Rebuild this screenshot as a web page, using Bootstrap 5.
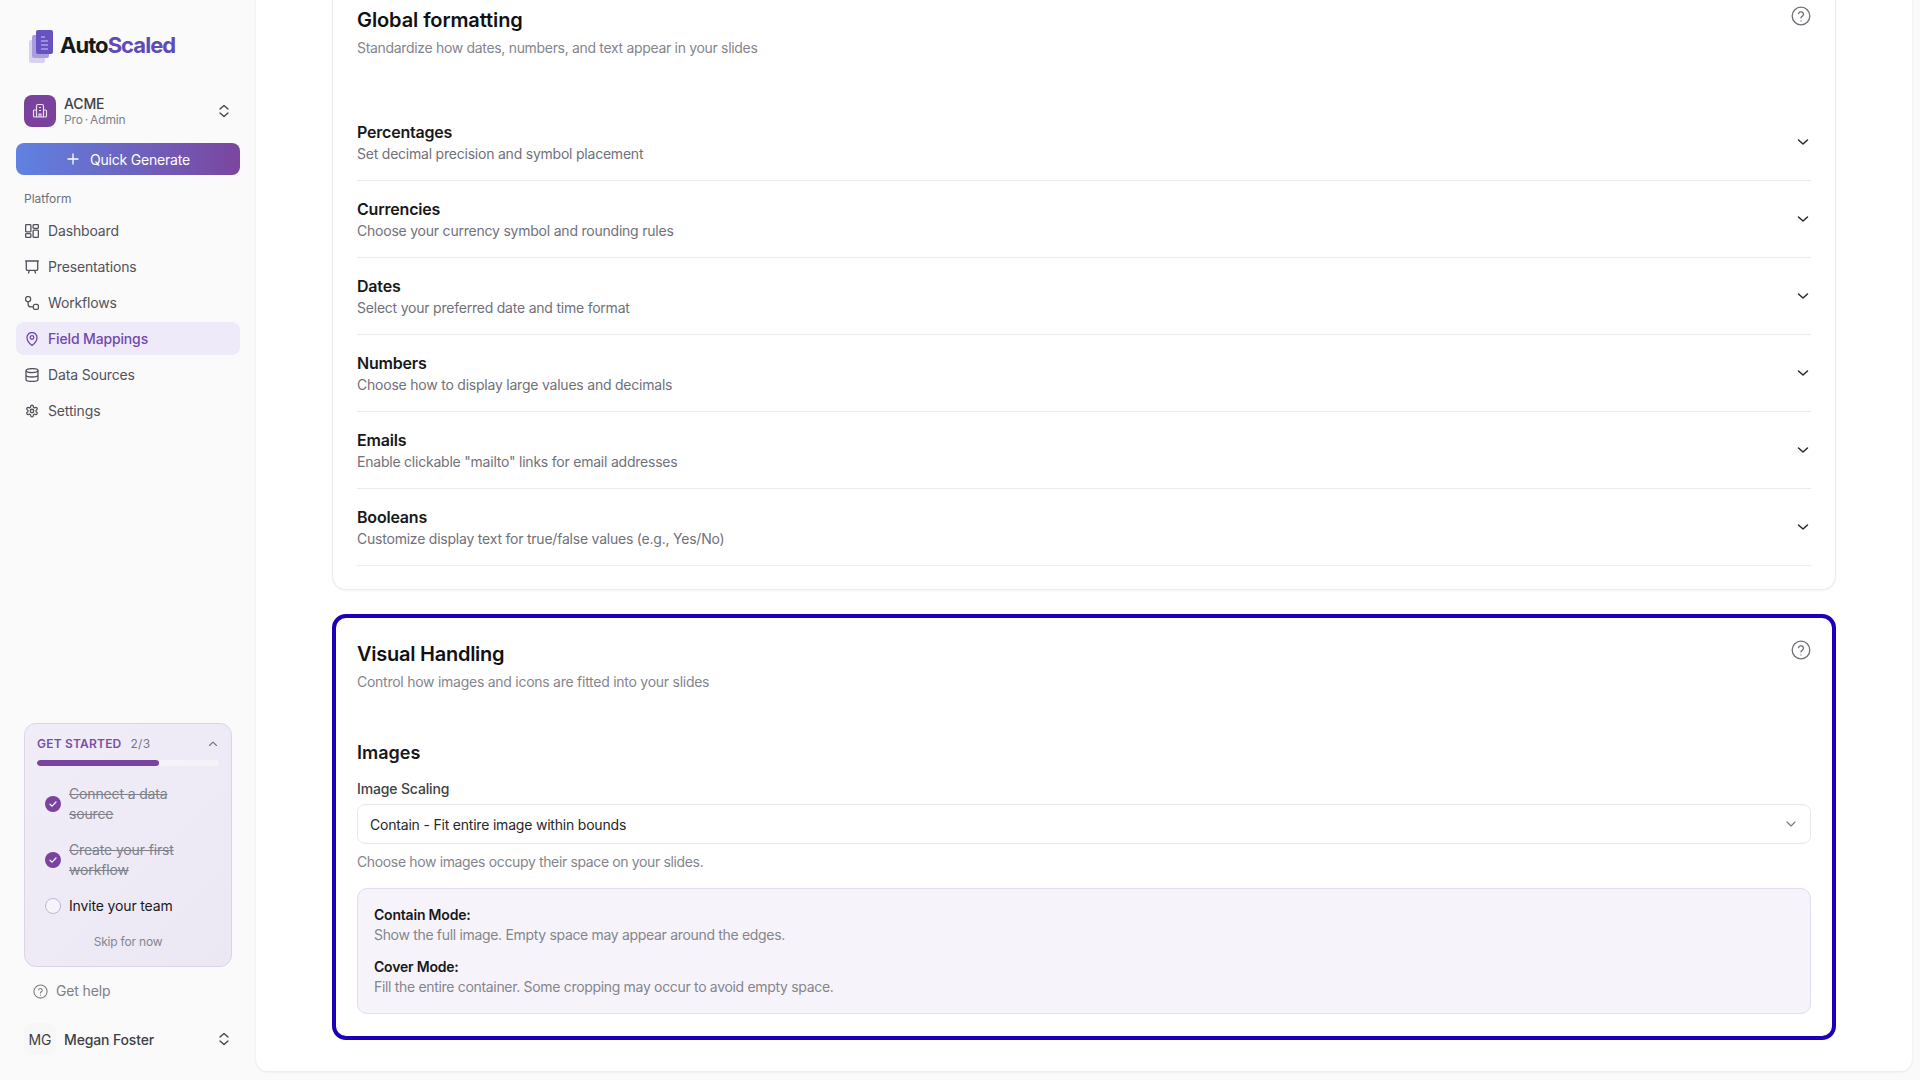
<!DOCTYPE html>
<html lang="en">
<head>
  <meta charset="UTF-8">
  <meta name="viewport" content="width=device-width, initial-scale=1.0">
  <title>Field Mappings</title>
  <link href="https://cdn.jsdelivr.net/npm/bootstrap@5.3.0/dist/css/bootstrap.min.css" rel="stylesheet">
  <style>
    html, body { height: 100%; overflow: hidden; }
    body { font-family: Inter, "Noto Sans", sans-serif; background: #fafafa; color: #18181b; font-size: 14px; letter-spacing: -0.15px; }
    svg { flex-shrink: 0; display: block; }
    .shell { height: 1080px; }
    .side { width: 256px; height: 1080px; }
    .brand { height: 87px; padding: 28px 0 0 28px; gap: 6px; }
    .brand-name { font-size: 22px; font-weight: 700; letter-spacing: -0.95px; line-height: 34px; color: #18181b; }
    .brand-name span { color: #5f4bb6; }
    .org { height: 48px; margin: 0 24px; gap: 8px; }
    .org-tile { width: 32px; height: 32px; border-radius: 8px; background: #7a429c; }
    .org-name { font-size: 14px; font-weight: 500; line-height: 17px; color: #3f3f46; }
    .org-role { font-size: 12px; line-height: 16px; color: #7f7f87; }
    .quick { margin: 8px 16px 0; height: 32px; width: 224px; border: 0; border-radius: 8px; color: #fff; font-size: 14px; gap: 10px; letter-spacing: -0.2px;
      background: linear-gradient(90deg, #5f82e2, #7b469f); }
    .quick:hover { color: #fff; }
    .side-label { margin: 16px 0 0 24px; font-size: 12px; line-height: 16px; color: #6f6f76; letter-spacing: 0; }
    .side-menu { margin: 7px 16px 0; }
    .side-link { height: 33px; margin-bottom: 3px; padding-left: 9px; gap: 9px; border-radius: 8px; color: #52525b; font-size: 14px; text-decoration: none; }
    .side-link.on { background: #efeafa; color: #7148ae; font-weight: 500; }
    .starter { width: 208px; height: 244px; margin-left: 24px; padding: 12px 12px 0; border: 1px solid #dcd2ea; border-radius: 12px;
      background: linear-gradient(135deg, #f0edf8, #ece8f3); }
    .starter-title { font-size: 12px; font-weight: 600; color: #7a4fa8; line-height: 16px; gap: 9px; letter-spacing: .2px; }
    .starter-title span { font-weight: 400; color: #77777f; letter-spacing: .3px; }
    .starter .progress { height: 6px; margin-top: 8px; background: #f5f3f6; border-radius: 3px; }
    .starter .progress-bar { background: #7a439f; border-radius: 3px; }
    .task { gap: 8px; padding-left: 8px; font-size: 14px; line-height: 20px; }
    .task-done { width: 120px; color: #80808a; text-decoration: line-through; }
    .tick { width: 16px; height: 16px; border-radius: 50%; background: #7a439f; }
    .tick-empty { width: 16px; height: 16px; border-radius: 50%; border: 1px solid #c4b3d8; background: #f6f4fa; }
    .skip { font-size: 12px; color: #85858d; line-height: 16px; letter-spacing: -0.2px; }
    .help { margin: 14px 0 0 33px; gap: 8px; color: #7f7f87; font-size: 14px; line-height: 20px; }
    .person { margin: 22px 0 25px 24px; gap: 8px; width: 208px; }
    .person-tile { width: 32px; height: 32px; border-radius: 8px; background: #f7f7f8; font-size: 14px; color: #3f3f46; letter-spacing: 0; }
    .person-name { font-size: 14px; font-weight: 500; color: #3f3f46; }
    .panel { width: 1656px; height: 1071px; background: #fff; border-radius: 0 0 12px 12px; box-shadow: 0 1px 3px rgba(0,0,0,.08); overflow: hidden; padding: 0 76px 31px; }
    .sheet { position: relative; border-radius: 14px; background: #fff; flex-shrink: 0; }
    .sheet-plain { border: 1px solid #ececee; border-top: 0; box-shadow: 0 1px 2px rgba(0,0,0,.05); padding: 0 24px 23px; border-radius: 0 0 14px 14px; }
    .sheet-mark { border: 4px solid #1c00b8; margin-top: 24px; padding: 22px 21px 22px; }
    .sheet-title { font-size: 20px; font-weight: 600; line-height: 28px; letter-spacing: -0.1px; color: #111113; }
    .sheet-sub { margin-top: 4px; font-size: 14px; line-height: 20px; letter-spacing: -0.32px; color: #85858d; }
    .sheet-mark .sheet-title { letter-spacing: -0.25px; }
    .sheet-mark .sheet-sub { letter-spacing: -0.26px; }
    .help-mark { position: absolute; }
    .fold { height: 77px; border-bottom: 1px solid #ececee; }
    .fold-name { font-size: 16px; font-weight: 600; line-height: 24px; letter-spacing: -0.2px; color: #18181b; }
    .fold-text { font-size: 14px; line-height: 20px; letter-spacing: -0.22px; color: #71717a; }
    .group-title { font-size: 18px; font-weight: 600; line-height: 28px; color: #18181b; margin-top: 47px; letter-spacing: 0; }
    .field-label { font-size: 14px; font-weight: 500; line-height: 20px; margin-top: 12px; color: #3f3f46; }
    .picker { height: 40px; margin-top: 5px; padding: 0 12px; border: 1px solid #e8e8ea; border-radius: 8px; font-size: 14px; letter-spacing: -0.2px; color: #27272a; }
    .hint { margin-top: 8px; font-size: 14px; line-height: 20px; letter-spacing: -0.36px; color: #85858d; }
    .modes { margin-top: 16px; height: 126px; padding: 16px; background: #f6f4fa; border: 1px solid #e4dcf0; border-radius: 10px; font-size: 14px; line-height: 20px; letter-spacing: -0.32px; color: #85858d; }
    .modes strong { display: block; font-weight: 600; letter-spacing: -0.2px; color: #18181b; }
    .modes p { margin: 0 0 12px; }
  </style>
</head>
<body>
  <div class="shell d-flex">
    <aside class="side d-flex flex-column flex-shrink-0">
      <div class="brand d-flex align-items-start">
        <svg width="26" height="35" viewBox="0 0 26 35">
          <rect x="1" y="12" width="16" height="23" rx="2" fill="#d9d2ee"/>
          <rect x="4" y="7" width="17" height="23" rx="2" fill="#a99ddd"/>
          <rect x="8" y="2" width="17" height="24" rx="2" fill="#6652c0"/>
          <path d="M13 9h4M13 13h7M13 17h7M13 21h7" stroke="#cfc8f2" stroke-width="1.200"/>
        </svg>
        <div class="brand-name">Auto<span>Scaled</span></div>
      </div>
      <div class="org d-flex align-items-center">
        <div class="org-tile d-flex align-items-center justify-content-center">
          <svg width="16" height="16" viewBox="0 0 16 16" fill="none" stroke="#e9dff0" stroke-width="1.200"><path d="M4.500 14V3A1.500 1.500 0 0 1 6 1.500h4A1.500 1.500 0 0 1 11.500 3v11M4.500 7H2.500a1 1 0 0 0-1 1v5a1 1 0 0 0 1 1h11a1 1 0 0 0 1-1V8a1 1 0 0 0-1-1h-2M7 14v-3h2v3M7 4.500h2M7 7.500h2"/></svg>
        </div>
        <div class="flex-grow-1">
          <div class="org-name">ACME</div>
          <div class="org-role">Pro&#8201;·&#8201;Admin</div>
        </div>
        <svg width="16" height="16" viewBox="0 0 16 16" fill="none" stroke="#3f3f46" stroke-width="1.300" stroke-linecap="round" stroke-linejoin="round"><path d="M4 6l4-3.500L12 6M4 10l4 3.500 4-3.500"/></svg>
      </div>
      <button class="btn quick d-flex align-items-center justify-content-center p-0">
        <svg width="14" height="14" viewBox="0 0 14 14" stroke="#fff" stroke-width="1.300" stroke-linecap="round"><path d="M7 2v10M2 7h10"/></svg>
        Quick Generate
      </button>
      <div class="side-label">Platform</div>
      <nav class="side-menu d-flex flex-column">
        <a class="side-link d-flex align-items-center" href="#">
          <svg width="14" height="14" viewBox="0 0 14 14" fill="none" stroke="currentColor" stroke-width="1.300"><rect x=".6" y=".6" width="5.300" height="7.300" rx="1"/><rect x="8.100" y=".6" width="5.300" height="3.800" rx="1"/><rect x="8.100" y="6.100" width="5.300" height="7.300" rx="1"/><rect x=".6" y="9.600" width="5.300" height="3.800" rx="1"/></svg>
          Dashboard
        </a>
        <a class="side-link d-flex align-items-center" href="#">
          <svg width="14" height="14" viewBox="0 0 14 14" fill="none" stroke="currentColor" stroke-width="1.300" stroke-linecap="round"><path d="M.6 1h12.800M1.300 1v8.500a.8.800 0 0 0 .8.800h9.800a.8.800 0 0 0 .8-.8V1M4.500 10.300 3.500 13M9.500 10.300l1 2.700"/></svg>
          Presentations
        </a>
        <a class="side-link d-flex align-items-center" href="#">
          <svg width="14" height="14" viewBox="0 0 14 14" fill="none" stroke="currentColor" stroke-width="1.300"><rect x=".6" y=".6" width="5" height="5" rx="2"/><rect x="8.400" y="8.400" width="5" height="5" rx="1.500"/><path d="M3.100 5.600v2.300a3 3 0 0 0 3 3h2.300"/></svg>
          Workflows
        </a>
        <a class="side-link on d-flex align-items-center" href="#">
          <svg width="14" height="14" viewBox="0 0 14 14" fill="none" stroke="currentColor" stroke-width="1.300"><path d="M7 13.500S2 9.700 2 5.500a5 5 0 0 1 10 0c0 4.200-5 8-5 8z"/><circle cx="7" cy="5.500" r="1.800"/></svg>
          Field Mappings
        </a>
        <a class="side-link d-flex align-items-center" href="#">
          <svg width="14" height="14" viewBox="0 0 14 14" fill="none" stroke="currentColor" stroke-width="1.300"><ellipse cx="7" cy="2.600" rx="6" ry="2"/><path d="M1 2.600v8.800c0 1.100 2.700 2 6 2s6-.9 6-2V2.600M1 7c0 1.100 2.700 2 6 2s6-.9 6-2"/></svg>
          Data Sources
        </a>
        <a class="side-link d-flex align-items-center" href="#">
          <svg width="14" height="14" viewBox="0 0 24 24" fill="none" stroke="currentColor" stroke-width="2.200" stroke-linecap="round" stroke-linejoin="round"><path d="M12.220 2h-.44a2 2 0 0 0-2 2v.18a2 2 0 0 1-1 1.730l-.43.25a2 2 0 0 1-2 0l-.15-.08a2 2 0 0 0-2.730.73l-.22.38a2 2 0 0 0 .73 2.730l.15.1a2 2 0 0 1 1 1.720v.51a2 2 0 0 1-1 1.740l-.15.09a2 2 0 0 0-.73 2.730l.22.38a2 2 0 0 0 2.730.73l.15-.08a2 2 0 0 1 2 0l.43.25a2 2 0 0 1 1 1.730V20a2 2 0 0 0 2 2h.44a2 2 0 0 0 2-2v-.18a2 2 0 0 1 1-1.730l.43-.25a2 2 0 0 1 2 0l.15.08a2 2 0 0 0 2.730-.73l.22-.39a2 2 0 0 0-.73-2.730l-.15-.08a2 2 0 0 1-1-1.740v-.5a2 2 0 0 1 1-1.740l.15-.09a2 2 0 0 0 .73-2.730l-.22-.38a2 2 0 0 0-2.730-.73l-.15.08a2 2 0 0 1-2 0l-.43-.25a2 2 0 0 1-1-1.730V4a2 2 0 0 0-2-2z"/><circle cx="12" cy="12" r="3"/></svg>
          Settings
        </a>
      </nav>
      <div class="flex-grow-1"></div>
      <section class="starter d-flex flex-column">
        <div class="starter-title d-flex align-items-center">
          GET STARTED <span>2/3</span>
          <svg class="ms-auto" width="12" height="12" viewBox="0 0 12 12" fill="none" stroke="#6f6f76" stroke-width="1.100" stroke-linecap="round" stroke-linejoin="round"><path d="M2.500 7.500 6 4.200l3.500 3.300"/></svg>
        </div>
        <div class="progress"><div class="progress-bar" style="width: 67%"></div></div>
        <div class="task d-flex align-items-center" style="margin-top: 18px">
          <div class="tick d-flex align-items-center justify-content-center flex-shrink-0"><svg width="10" height="10" viewBox="0 0 10 10" fill="none" stroke="#fff" stroke-width="1.200" stroke-linecap="round" stroke-linejoin="round"><path d="M2 5.200l2.100 2L8 3"/></svg></div>
          <div class="task-done">Connect a data source</div>
        </div>
        <div class="task d-flex align-items-center" style="margin-top: 16px">
          <div class="tick d-flex align-items-center justify-content-center flex-shrink-0"><svg width="10" height="10" viewBox="0 0 10 10" fill="none" stroke="#fff" stroke-width="1.200" stroke-linecap="round" stroke-linejoin="round"><path d="M2 5.200l2.100 2L8 3"/></svg></div>
          <div class="task-done">Create your first workflow</div>
        </div>
        <div class="task d-flex align-items-center" style="margin-top: 16px">
          <div class="tick-empty flex-shrink-0"></div>
          <div>Invite your team</div>
        </div>
        <div class="skip text-center" style="margin-top: 18px">Skip for now</div>
      </section>
      <div class="help d-flex align-items-center">
        <svg width="15" height="15" viewBox="0 0 16 16" fill="none" stroke="currentColor" stroke-width="1.200" stroke-linecap="round"><circle cx="8" cy="8" r="7"/><path d="M6 6.200a2 2 0 0 1 3.900.6c0 1.300-1.900 1.600-1.900 2.700M8 11.800v.1"/></svg>
        Get help
      </div>
      <div class="person d-flex align-items-center">
        <div class="person-tile d-flex align-items-center justify-content-center">MG</div>
        <div class="person-name flex-grow-1">Megan Foster</div>
        <svg width="16" height="16" viewBox="0 0 16 16" fill="none" stroke="#3f3f46" stroke-width="1.300" stroke-linecap="round" stroke-linejoin="round"><path d="M4 6l4-3.500L12 6M4 10l4 3.500 4-3.500"/></svg>
      </div>
    </aside>

    <main class="panel d-flex flex-column justify-content-end flex-shrink-0">
      <section class="sheet sheet-plain">
        <svg class="help-mark" style="right: 24px; top: 6px" width="20" height="20" viewBox="0 0 20 20" fill="none" stroke="#6f6f76" stroke-width="1.300" stroke-linecap="round"><circle cx="10" cy="10" r="8.800"/><path d="M7.500 7.700a2.500 2.500 0 0 1 4.900.8c0 1.700-2.400 2-2.400 3.400M10 14.800v.1"/></svg>
        <div class="sheet-title" style="padding-top: 6px">Global formatting</div>
        <div class="sheet-sub" style="margin-bottom: 46px">Standardize how dates, numbers, and text appear in your slides</div>
        <div class="fold d-flex align-items-center justify-content-between">
          <div><div class="fold-name">Percentages</div><div class="fold-text">Set decimal precision and symbol placement</div></div>
          <svg width="16" height="16" viewBox="0 0 16 16" fill="none" stroke="#27272a" stroke-width="1.500" stroke-linecap="round" stroke-linejoin="round"><path d="M3.500 6l4.500 4 4.500-4"/></svg>
        </div>
        <div class="fold d-flex align-items-center justify-content-between">
          <div><div class="fold-name">Currencies</div><div class="fold-text">Choose your currency symbol and rounding rules</div></div>
          <svg width="16" height="16" viewBox="0 0 16 16" fill="none" stroke="#27272a" stroke-width="1.500" stroke-linecap="round" stroke-linejoin="round"><path d="M3.500 6l4.500 4 4.500-4"/></svg>
        </div>
        <div class="fold d-flex align-items-center justify-content-between">
          <div><div class="fold-name">Dates</div><div class="fold-text">Select your preferred date and time format</div></div>
          <svg width="16" height="16" viewBox="0 0 16 16" fill="none" stroke="#27272a" stroke-width="1.500" stroke-linecap="round" stroke-linejoin="round"><path d="M3.500 6l4.500 4 4.500-4"/></svg>
        </div>
        <div class="fold d-flex align-items-center justify-content-between">
          <div><div class="fold-name">Numbers</div><div class="fold-text">Choose how to display large values and decimals</div></div>
          <svg width="16" height="16" viewBox="0 0 16 16" fill="none" stroke="#27272a" stroke-width="1.500" stroke-linecap="round" stroke-linejoin="round"><path d="M3.500 6l4.500 4 4.500-4"/></svg>
        </div>
        <div class="fold d-flex align-items-center justify-content-between">
          <div><div class="fold-name">Emails</div><div class="fold-text">Enable clickable "mailto" links for email addresses</div></div>
          <svg width="16" height="16" viewBox="0 0 16 16" fill="none" stroke="#27272a" stroke-width="1.500" stroke-linecap="round" stroke-linejoin="round"><path d="M3.500 6l4.500 4 4.500-4"/></svg>
        </div>
        <div class="fold d-flex align-items-center justify-content-between">
          <div><div class="fold-name">Booleans</div><div class="fold-text">Customize display text for true/false values (e.g., Yes/No)</div></div>
          <svg width="16" height="16" viewBox="0 0 16 16" fill="none" stroke="#27272a" stroke-width="1.500" stroke-linecap="round" stroke-linejoin="round"><path d="M3.500 6l4.500 4 4.500-4"/></svg>
        </div>
      </section>

      <section class="sheet sheet-mark">
        <svg class="help-mark" style="right: 21px; top: 22px" width="20" height="20" viewBox="0 0 20 20" fill="none" stroke="#6f6f76" stroke-width="1.300" stroke-linecap="round"><circle cx="10" cy="10" r="8.800"/><path d="M7.500 7.700a2.500 2.500 0 0 1 4.900.8c0 1.700-2.400 2-2.400 3.400M10 14.800v.1"/></svg>
        <div class="sheet-title">Visual Handling</div>
        <div class="sheet-sub">Control how images and icons are fitted into your slides</div>
        <div class="group-title">Images</div>
        <div class="field-label">Image Scaling</div>
        <div class="picker d-flex align-items-center justify-content-between">
          Contain - Fit entire image within bounds
          <svg width="14" height="14" viewBox="0 0 14 14" fill="none" stroke="#77777f" stroke-width="1.100" stroke-linecap="round" stroke-linejoin="round"><path d="M3 5l4 4 4-4"/></svg>
        </div>
        <div class="hint">Choose how images occupy their space on your slides.</div>
        <div class="modes">
          <p><strong>Contain Mode:</strong>Show the full image. Empty space may appear around the edges.</p>
          <p class="mb-0"><strong>Cover Mode:</strong>Fill the entire container. Some cropping may occur to avoid empty space.</p>
        </div>
      </section>
    </main>
  </div>
  <script src="https://cdn.jsdelivr.net/npm/bootstrap@5.3.0/dist/js/bootstrap.bundle.min.js"></script>
</body>
</html>
